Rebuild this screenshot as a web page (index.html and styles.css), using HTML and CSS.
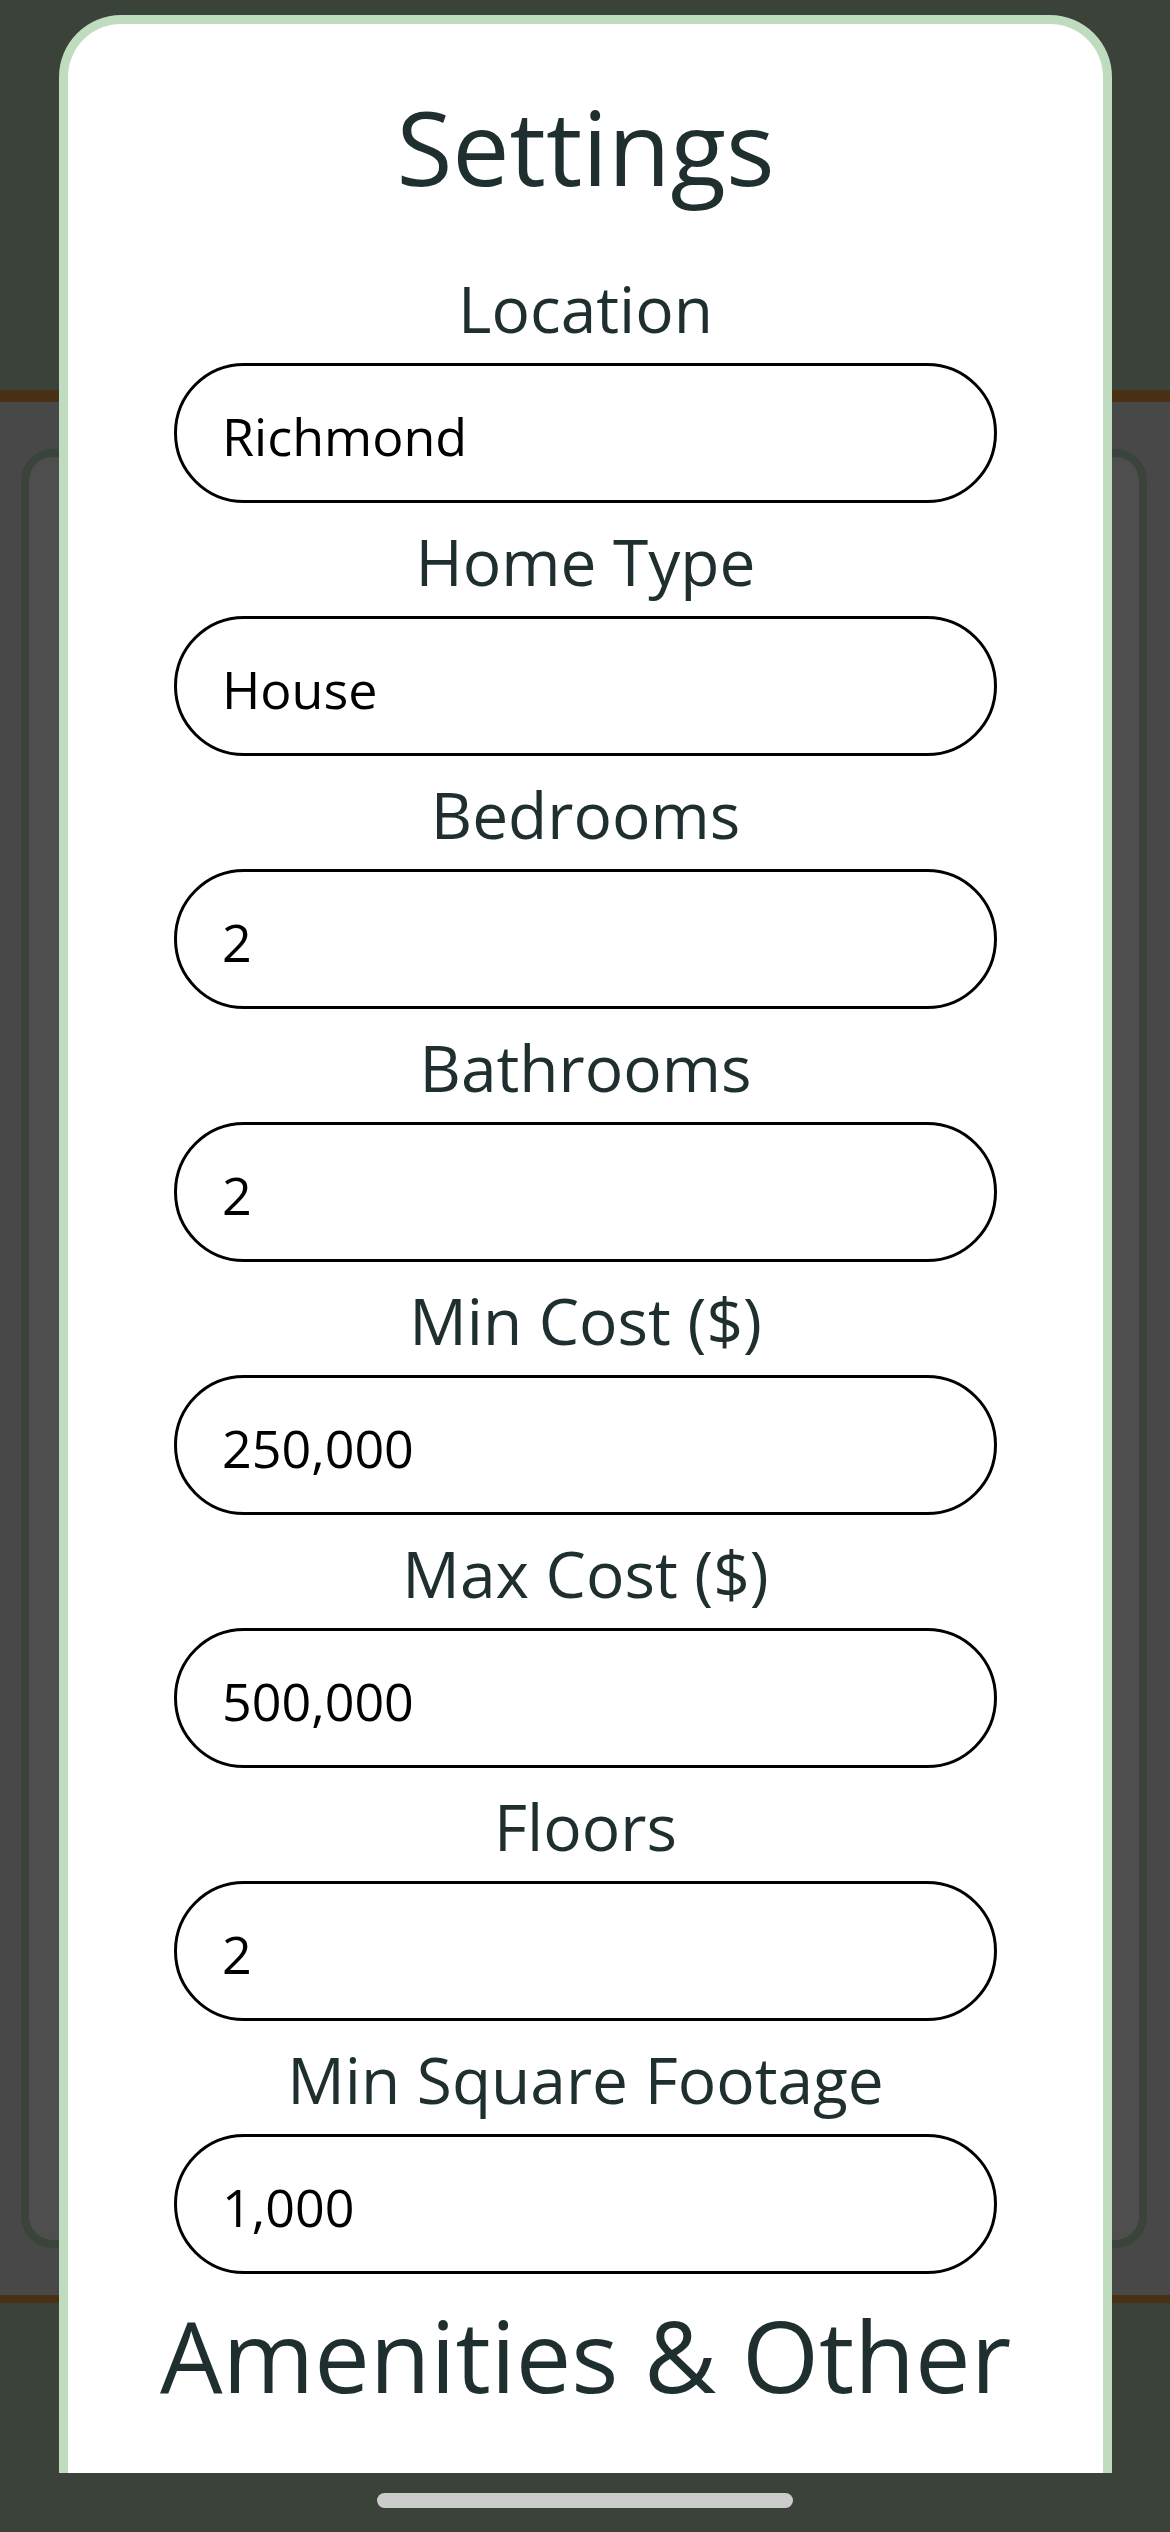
FILE: index.html
```html
<!DOCTYPE html>
<html lang="en">
<head>
<meta charset="utf-8">
<title>Settings</title>
<link rel="stylesheet" href="styles.css">
</head>
<body>
<div class="screen">
  <header class="topbar"></header>
  <main class="content">
    <div class="card"></div>
  </main>
  <footer class="bottombar"></footer>

  <section class="modal">
    <h1 class="title">Settings</h1>
    <form class="fields">
      <label class="field-label" for="f-location">Location</label>
      <input class="field-input" id="f-location" value="Richmond">
      <label class="field-label" for="f-type">Home Type</label>
      <input class="field-input" id="f-type" value="House">
      <label class="field-label" for="f-bed">Bedrooms</label>
      <input class="field-input" id="f-bed" value="2">
      <label class="field-label" for="f-bath">Bathrooms</label>
      <input class="field-input" id="f-bath" value="2">
      <label class="field-label" for="f-min">Min Cost ($)</label>
      <input class="field-input" id="f-min" value="250,000">
      <label class="field-label" for="f-max">Max Cost ($)</label>
      <input class="field-input" id="f-max" value="500,000">
      <label class="field-label" for="f-floors">Floors</label>
      <input class="field-input" id="f-floors" value="2">
      <label class="field-label" for="f-sqft">Min Square Footage</label>
      <input class="field-input" id="f-sqft" value="1,000">
    </form>
    <h2 class="title section-title">Amenities &amp; Other</h2>
  </section>

  <div class="home-indicator"></div>
</div>
</body>
</html>
```

FILE: styles.css
```css
* {
  box-sizing: border-box;
}

html, body {
  margin: 0;
  padding: 0;
}

body {
  font-family: "Open Sans", "Noto Sans", sans-serif;
  background: #3a423a;
}

.screen {
  position: relative;
  width: 1170px;
  height: 2532px;
  overflow: hidden;
  display: flex;
  flex-direction: column;
}

.topbar {
  height: 402px;
  background: #3a423a;
  border-bottom: 12px solid #4a3116;
}

.content {
  height: 1901px;
  background: #484848;
  border-bottom: 8px solid #4a3116;
  padding: 47px 23px 47px 21px;
  display: flex;
}

.card {
  flex: 1;
  border: 8px solid #3a443a;
  border-radius: 32px;
  background: #4e4e4e;
}

.bottombar {
  flex: 1;
  background: #3a423a;
}

.modal {
  position: absolute;
  left: 59px;
  top: 15px;
  width: 1053px;
  height: 2458px;
  background: #ffffff;
  border: 9px solid #bfdcbf;
  border-bottom: none;
  border-radius: 62px 62px 0 0;
  overflow: hidden;
  padding-top: 63px;
  display: flex;
  flex-direction: column;
  align-items: center;
}

.title {
  margin: 0;
  font-size: 102px;
  line-height: 120px;
  font-weight: 400;
  color: #1f2e2e;
  text-align: center;
}

.fields {
  display: flex;
  flex-direction: column;
  align-items: center;
  margin-top: 63px;
}

.field-label {
  display: block;
  font-size: 64px;
  line-height: 77px;
  color: #1f2e2e;
  text-align: center;
  margin-bottom: 16px;
}

.field-input {
  display: block;
  width: 823px;
  height: 140px;
  border: 3px solid #000000;
  border-radius: 70px;
  padding: 4px 40px 0 45px;
  font-family: "Open Sans", "Noto Sans", sans-serif;
  font-size: 52px;
  color: #000000;
  background: #ffffff;
  outline: none;
  margin-bottom: 20px;
}

.field-input:last-child {
  margin-bottom: 0;
}

.section-title {
  margin-top: 21px;
  font-size: 99px;
}

.home-indicator {
  position: absolute;
  left: 377px;
  top: 2493px;
  width: 416px;
  height: 15px;
  border-radius: 8px;
  background: #cccccc;
}
```
